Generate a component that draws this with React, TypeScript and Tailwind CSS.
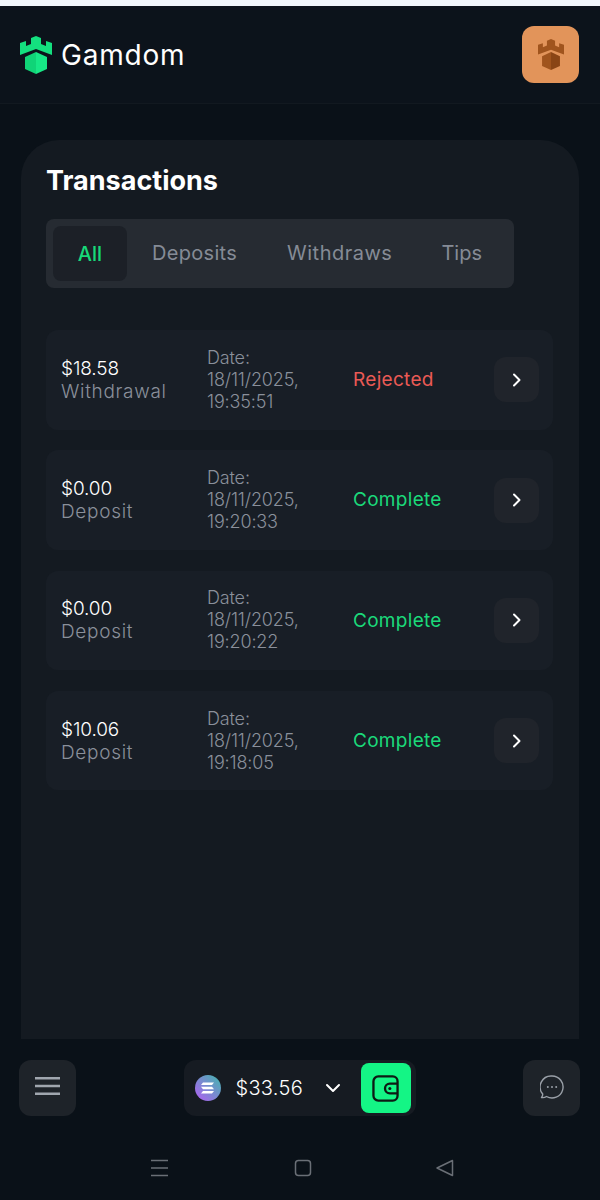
const transactions = [
  { id: 1, amount: '$18.58', type: 'Withdrawal', date: '18/11/2025,', time: '19:35:51', status: 'Rejected' },
  { id: 2, amount: '$0.00', type: 'Deposit', date: '18/11/2025,', time: '19:20:33', status: 'Complete' },
  { id: 3, amount: '$0.00', type: 'Deposit', date: '18/11/2025,', time: '19:20:22', status: 'Complete' },
  { id: 4, amount: '$10.06', type: 'Deposit', date: '18/11/2025,', time: '19:18:05', status: 'Complete' },
];

function Castle({ top, left, right, className }: { top: string; left: string; right: string; className: string }) {
  return (
    <svg viewBox="0 0 32 38" className={className}>
      <path d="M0 7l6-2v5l5-2V2l5-2 5 2v6l5 2V5l6 2v12l-16-6-16 6z" fill={top} />
      <path d="M16 16 5 21v12l11 5z" fill={left} />
      <path d="M16 16l11 5v12l-11 5z" fill={right} />
    </svg>
  );
}

function Chevron() {
  return (
    <svg viewBox="0 0 16 16" className="w-4 h-4" fill="none" stroke="white" strokeWidth="2" strokeLinecap="round" strokeLinejoin="round">
      <path d="M5 2.500 10.500 8 5 13.500" />
    </svg>
  );
}

function Row({ tx }: { tx: (typeof transactions)[number] }) {
  return (
    <div className="h-[99.5px] rounded-xl bg-[#181e26] flex items-center pl-[15px] pr-[14px]">
      <div className="w-[146px] text-[19px] leading-[23px] font-light">
        <div className="text-white tracking-[-0.1px]">{tx.amount}</div>
        <div className="text-[#8a909b] tracking-[0.7px]">{tx.type}</div>
      </div>
      <div className="w-[146px] text-[18px] leading-[22px] font-light text-[#8a909b] tracking-[-0.15px]">
        <div>Date:</div>
        <div>{tx.date}</div>
        <div>{tx.time}</div>
      </div>
      <div className={tx.status === 'Rejected' ? 'flex-1 mt-[1px] text-[19px] tracking-[0.3px] text-[#ea5a55]' : 'flex-1 mt-[1px] text-[19px] tracking-[0.3px] text-[#1bd97a]'}>
        {tx.status}
      </div>
      <button className="w-[45px] h-[45px] rounded-xl bg-[#20242b] flex items-center justify-center">
        <Chevron />
      </button>
    </div>
  );
}

export default function App() {
  return (
    <div className="w-[600px] h-[1200px] overflow-hidden flex flex-col bg-[#0a1118] font-['Inter',sans-serif]">
      <div className="h-[6px] bg-[#f1f6fb]"></div>

      <header className="h-[98px] shrink-0 bg-[#0c131b] border-b border-[#121920] flex items-center justify-between pl-[20px] pr-[21px]">
        <div className="flex items-center gap-[9px]">
          <Castle top="#14e07f" left="#10d477" right="#17e886" className="w-[32px] h-[38px]" />
          <span className="text-white text-[28px] font-normal tracking-[0.8px] leading-none">Gamdom</span>
        </div>
        <div className="w-[57px] h-[57px] rounded-xl bg-[#e2945a] flex items-center justify-center">
          <Castle top="#a0541d" left="#a0541d" right="#8a4515" className="w-[26px] h-[31px]" />
        </div>
      </header>

      <main className="flex-1 px-[21px] pt-[36px]">
        <div className="h-[899px] rounded-t-[38px] bg-[#141a21] px-[25px] pt-[25px]">
          <h1 className="text-white text-[27px] leading-[32px] font-bold">Transactions</h1>

          <div className="mt-[22px] w-[468px] h-[69px] rounded-lg bg-[#262b32] flex items-center pl-[7px] text-[20px] text-[#858b96]">
            <div className="w-[74px] h-[55px] rounded-lg bg-[#1c2027] flex items-center justify-center text-[#17d979] font-medium">All</div>
            <div className="ml-[25px] mb-[2px] tracking-[0.3px]">Deposits</div>
            <div className="ml-[50px] mb-[2px] tracking-[0.5px]">Withdraws</div>
            <div className="ml-[49px] mb-[2px]">Tips</div>
          </div>

          <div className="mt-[42px] w-[507px] flex flex-col gap-[20.8px]">
            {transactions.map((tx) => (
              <Row key={tx.id} tx={tx} />
            ))}
          </div>
        </div>
      </main>

      <nav className="h-[56px] shrink-0 mt-[21px] flex items-center justify-between pl-[19px] pr-[20px]">
        <button className="w-[57px] h-[56px] rounded-xl bg-[#1e2329] flex items-center justify-center">
          <svg viewBox="0 0 26 18" className="w-[25px] h-[18px] mb-[4px]" stroke="#a0a6ae" strokeWidth="2.600">
            <path d="M0 1h26M0 9h26M0 17h26" />
          </svg>
        </button>

        <div className="w-[232px] h-[56px] rounded-xl bg-[#161b22] flex items-center pl-[11px]">
          <svg viewBox="0 0 26 26" className="w-[26px] h-[26px]">
            <defs>
              <linearGradient id="sol" x1="0" y1="1" x2="1" y2="0">
                <stop offset="0" stopColor="#b45cf5" />
                <stop offset="1" stopColor="#3fb8ac" />
              </linearGradient>
            </defs>
            <circle cx="13" cy="13" r="13" fill="url(#sol)" />
            <path d="M8 7.500h11l-2 2.500H6zM6 11.800h11l2 2.400H8zM8 16h11l-2 2.500H6z" fill="white" />
          </svg>
          <span className="ml-[15px] w-[89px] text-white text-[20px] font-light tracking-[0.3px]">$33.56</span>
          <svg viewBox="0 0 16 10" className="w-[16px] h-[10px]" fill="none" stroke="white" strokeWidth="2" strokeLinecap="round" strokeLinejoin="round">
            <path d="M2 2l6 6 6-6" />
          </svg>
          <button className="ml-[20px] w-[50px] h-[50px] rounded-lg bg-[#14f585] flex items-center justify-center">
            <svg viewBox="0 0 28 28" className="w-[27px] h-[27px]" fill="none" stroke="#0d1a14" strokeWidth="2.400">
              <rect x="1.500" y="1.500" width="25" height="25" rx="5" />
              <path d="M26.500 9h-8a5 5 0 0 0 0 10h8" />
              <circle cx="18.500" cy="14" r="1.600" fill="#0d1a14" stroke="none" />
            </svg>
          </button>
        </div>

        <button className="w-[57px] h-[56px] rounded-xl bg-[#1e2329] flex items-center justify-center">
          <svg viewBox="0 0 24 24" className="w-[24px] h-[24px] mb-[2px]" fill="none" stroke="#9aa0a8" strokeWidth="1.400">
            <path d="M12 1a11 11 0 1 1-5.500 20.500C5 22.500 2.800 22.800 1.500 22.500c.8-.9 1.300-2 1.200-3.500A11 11 0 0 1 12 1z" strokeLinejoin="round" />
            <circle cx="7.800" cy="12" r="1" fill="#9aa0a8" stroke="none" />
            <circle cx="12" cy="12" r="1" fill="#9aa0a8" stroke="none" />
            <circle cx="16.200" cy="12" r="1" fill="#9aa0a8" stroke="none" />
          </svg>
        </button>
      </nav>

      {/* android nav bar */}
      <div className="flex-1 flex items-center pt-[19px] pl-[150px]">
        <svg viewBox="0 0 18 18" className="w-[18px] h-[18px]" stroke="#6a6f76" strokeWidth="1.500">
          <path d="M1 1.500h17M1 9h17M1 16.500h17" />
        </svg>
        <svg viewBox="0 0 18 18" className="ml-[126px] w-[18px] h-[18px]" fill="none" stroke="#6a6f76" strokeWidth="1.500">
          <rect x="1.500" y="1.500" width="15" height="15" rx="3" />
        </svg>
        <svg viewBox="0 0 18 18" className="ml-[124px] w-[18px] h-[18px]" fill="none" stroke="#6a6f76" strokeWidth="1.500" strokeLinejoin="round">
          <path d="M1 9 16.500 1.500v15z" />
        </svg>
      </div>
    </div>
  );
}
